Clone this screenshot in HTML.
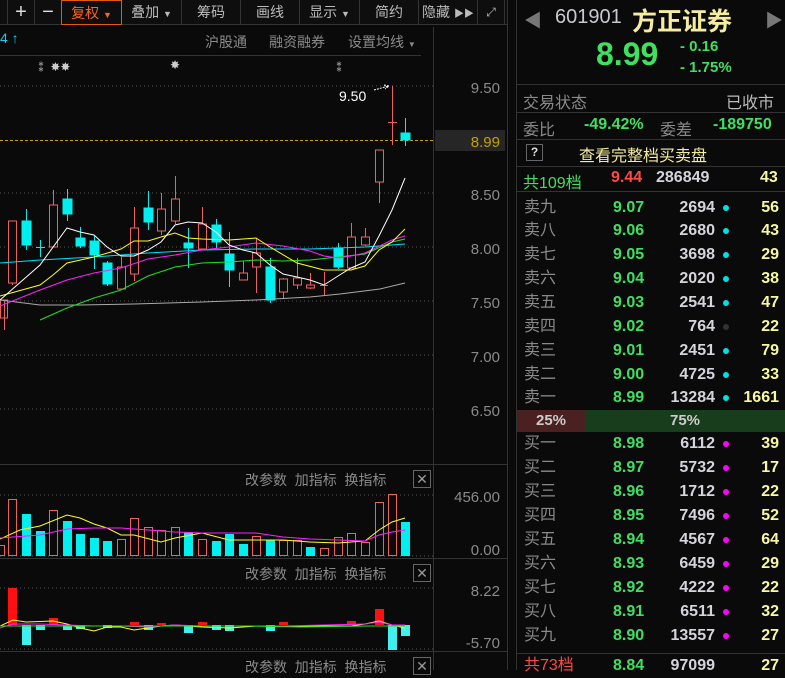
<!DOCTYPE html>
<html><head><meta charset="utf-8"><style>
*{margin:0;padding:0;box-sizing:border-box}
body{width:785px;height:670px;background:#0a0a0a;overflow:hidden;position:relative;font-family:"Liberation Sans","Noto Sans CJK SC",sans-serif;color:#8a8a8a}
.a{position:absolute;white-space:nowrap}
.tb{position:absolute;top:0;height:25px;border-right:1px solid #333;color:#bbb;font-size:14px;text-align:center;line-height:24px}
.row{position:absolute;left:516px;width:269px;height:24px;font-size:16px;line-height:24px}
.row .l{position:absolute;left:8px;color:#8a8a8a}
.row .p{position:absolute;left:97px;color:#3ee060;font-weight:bold}
.row .v{position:absolute;right:70px;color:#d4d4dc;font-weight:bold;text-align:right}
.row .d{position:absolute;left:207px;top:9px;width:6px;height:6px;border-radius:50%}
.row .c{position:absolute;right:6px;color:#f8f8a0;font-weight:bold}
.hd{position:absolute;font-size:14px;color:#8a8a8a}
.x{position:absolute;width:18px;height:18px;border:1px solid #666;color:#999;font-size:14px;line-height:16px;text-align:center}
</style></head><body>
<div class="a" style="left:0;top:0;width:507px;height:25px;background:#0e0e0e;border-bottom:1px solid #333"></div>
<div class="tb" style="left:7px;width:28px;border-left:1px solid #333;font-size:20px;color:#ddd">+</div>
<div class="tb" style="left:35px;width:27px;font-size:20px;color:#ddd">−</div>
<div class="tb" style="left:61px;width:61px;border:1px solid #e05a10;color:#ff6418">复权 <span style="font-size:9px">▼</span></div>
<div class="tb" style="left:122px;width:60px">叠加 <span style="font-size:9px">▼</span></div>
<div class="tb" style="left:182px;width:59px">筹码</div>
<div class="tb" style="left:241px;width:59px">画线</div>
<div class="tb" style="left:300px;width:60px">显示 <span style="font-size:9px">▼</span></div>
<div class="tb" style="left:360px;width:59px">简约</div>
<div class="tb" style="left:419px;width:59px">隐藏 <span style="font-size:10px">▶▶</span></div>
<div class="tb" style="left:478px;width:27px;font-size:12px">⤢</div>

<div class="a" style="left:0;top:30px;font-size:14px;color:#1ec8e8">4 ↑</div>
<div class="a" style="left:205px;top:32px;font-size:14px">沪股通</div>
<div class="a" style="left:269px;top:32px;font-size:14px">融资融券</div>
<div class="a" style="left:348px;top:32px;font-size:14px">设置均线 <span style="font-size:8px">▼</span></div>
<div class="a" style="left:35px;top:58px;font-size:12px;color:#ccc">⁑ ✸✸</div>
<div class="a" style="left:170px;top:58px;font-size:12px;color:#ccc">✸</div>
<div class="a" style="left:333px;top:58px;font-size:12px;color:#ccc">⁑</div>

<svg class="a" style="left:0;top:0" width="516" height="670">
<g stroke="#333" stroke-width="1">
<line x1="0" y1="55.5" x2="421" y2="55.5"/>
<line x1="433.5" y1="27" x2="433.5" y2="670"/>
<line x1="507.5" y1="0" x2="507.5" y2="670"/>
<line x1="0" y1="464.5" x2="507" y2="464.5"/>
<line x1="0" y1="558.5" x2="507" y2="558.5"/>
<line x1="0" y1="651.5" x2="507" y2="651.5"/>
</g>
<g stroke="#555" stroke-dasharray="1,3">
<line x1="0" y1="86" x2="433" y2="86"/><line x1="0" y1="193" x2="433" y2="193"/>
<line x1="0" y1="247" x2="433" y2="247"/><line x1="0" y1="301" x2="433" y2="301"/>
<line x1="0" y1="355" x2="433" y2="355"/><line x1="0" y1="409" x2="433" y2="409"/>
<line x1="0" y1="495" x2="433" y2="495"/><line x1="0" y1="556" x2="433" y2="556"/>
<line x1="0" y1="588" x2="433" y2="588"/><line x1="0" y1="649" x2="433" y2="649"/>
</g>
<line x1="0" y1="140.5" x2="433" y2="140.5" stroke="#d0a000" stroke-dasharray="3,2"/>
<rect x="435" y="130" width="70" height="21" fill="#262626"/>
<g font-size="15" fill="#8a8a8a" text-anchor="end" font-family="Liberation Sans">
<text x="500" y="93">9.50</text><text x="500" y="147" fill="#c8a000">8.99</text>
<text x="500" y="200">8.50</text><text x="500" y="254">8.00</text><text x="500" y="308">7.50</text>
<text x="500" y="362">7.00</text><text x="500" y="416">6.50</text>
<text x="500" y="502">456.00</text><text x="500" y="555">0.00</text>
<text x="500" y="596">8.22</text><text x="500" y="648">-5.70</text>
</g>
<text x="339" y="101" font-size="14" fill="#fff">9.50</text>
<path d="M374 90 L389 86 M384 85 L389 86 L385 89" stroke="#fff" fill="none" stroke-dasharray="2,1"/>
<g stroke="#f06060" fill="none" stroke-width="1">
<path d="M4.5 300V330M12.5 221V285M53.5 190V247M121.5 257V289M134.5 207V281M161.5 193V235M175.5 176V224M202.5 207V249M243.5 261V280M256.5 238V293M283.5 278V298M297.5 258V289M310.5 273V289M324.5 272V295M351.5 223V268M365.5 228V246M379.5 150V203M392.5 86V145"/>
<rect x="0.5" y="300" width="7" height="18"/>
<rect x="8.5" y="221" width="8" height="62" fill="#0a0a0a"/>
<rect x="49.5" y="205" width="8" height="42" fill="#0a0a0a"/>
<rect x="117.5" y="267" width="8" height="22" fill="#0a0a0a"/>
<rect x="130.5" y="228" width="8" height="46" fill="#0a0a0a"/>
<rect x="157.5" y="209" width="8" height="22" fill="#0a0a0a"/>
<rect x="171.5" y="199" width="8" height="22" fill="#0a0a0a"/>
<rect x="198.5" y="224" width="8" height="25" fill="#0a0a0a"/>
<rect x="239.5" y="273" width="8" height="7" fill="#0a0a0a"/>
<rect x="252.5" y="253" width="8" height="14" fill="#0a0a0a"/>
<rect x="279.5" y="279" width="8" height="13" fill="#0a0a0a"/>
<rect x="293.5" y="278" width="8" height="7" fill="#0a0a0a"/>
<rect x="306.5" y="285" width="8" height="3" fill="#0a0a0a"/>
<line x1="320" y1="285.5" x2="328" y2="285.5"/>
<rect x="347.5" y="237" width="8" height="31" fill="#0a0a0a"/>
<rect x="361.5" y="237" width="8" height="8" fill="#0a0a0a"/>
<rect x="375.5" y="150" width="8" height="32" fill="#0a0a0a"/>
<line x1="388" y1="122.5" x2="397" y2="122.5"/>
</g>
<g stroke="#00f0f0" fill="#00f0f0">
<path d="M26.5 209V250M40.5 240V257M67.5 189V221M80.5 227V248M94.5 236V269M107.5 261V286M148.5 191V230M188.5 228V268M216.5 219V248M229.5 232V287M270.5 258V303M338.5 243V269M405.5 118V146" fill="none"/>
<rect x="22" y="221" width="9" height="24"/><line x1="36" y1="247.5" x2="45" y2="247.5"/>
<rect x="63" y="199" width="9" height="15"/><rect x="76" y="238" width="9" height="8"/>
<rect x="90" y="241" width="9" height="14"/><rect x="103" y="263" width="9" height="21"/>
<rect x="144" y="208" width="9" height="14"/><rect x="184" y="243" width="9" height="5"/>
<rect x="212" y="225" width="9" height="17"/><rect x="225" y="254" width="9" height="16"/>
<rect x="266" y="267" width="9" height="33"/><rect x="334" y="248" width="9" height="19"/>
<rect x="401" y="133" width="9" height="7"/>
</g>
<g fill="none" stroke-width="1">
<polyline stroke="#aaa" points="0,300 40,305 80,305 134,304 202,302 256,300 310,297 340,294 380,289 405,283"/>
<polyline stroke="#00e0ff" points="0,263 40,260 94,257 148,253 202,250 256,249 310,249 365,247 405,244"/>
<polyline stroke="#20e020" points="40,320 67,308 94,298 121,290 148,276 175,267 202,263 229,262 256,260 283,261 310,260 338,257 365,254 392,242 405,239"/>
<polyline stroke="#ff20ff" points="0,306 40,290 67,280 94,273 121,268 148,259 175,255 202,250 229,247 256,243 283,246 310,251 324,256 338,258 351,256 365,253 392,240 405,236"/>
<polyline stroke="#ffff20" points="0,296 40,285 53,275 67,263 94,257 121,249 134,241 148,241 161,237 175,233 188,238 202,239 229,240 256,238 270,247 297,263 324,270 351,270 365,266 379,250 392,242 405,229"/>
<polyline stroke="#fff" points="0,300 40,265 67,228 80,232 94,235 107,247 121,256 134,256 148,250 161,242 175,225 188,222 202,223 216,232 229,245 243,250 256,253 270,265 283,274 297,277 310,280 324,285 338,276 351,268 365,262 379,236 392,210 405,178"/>
</g>
<g stroke="#f06060" fill="none">
<rect x="-3.5" y="545.5" width="8" height="10"/><rect x="8.5" y="499.5" width="8" height="56"/>
<rect x="49.5" y="510.5" width="8" height="45"/><rect x="117.5" y="539.5" width="8" height="16"/>
<rect x="130.5" y="518.5" width="8" height="37"/><rect x="144.5" y="527.5" width="8" height="28"/>
<rect x="157.5" y="530.5" width="8" height="25"/><rect x="171.5" y="527.5" width="8" height="28"/>
<rect x="198.5" y="539.5" width="8" height="16"/><rect x="252.5" y="536.5" width="8" height="19"/>
<rect x="279.5" y="540.5" width="8" height="15"/><rect x="293.5" y="540.5" width="8" height="15"/>
<rect x="320.5" y="548.5" width="8" height="7"/><rect x="334.5" y="537.5" width="8" height="18"/>
<rect x="347.5" y="533.5" width="8" height="22"/><rect x="361.5" y="542.5" width="8" height="13"/>
<rect x="375.5" y="502.5" width="8" height="53"/><rect x="388.5" y="494.5" width="8" height="61"/>
</g>
<g fill="#00f0f0">
<rect x="22" y="514" width="9" height="42"/><rect x="36" y="531" width="9" height="25"/>
<rect x="63" y="521" width="9" height="35"/><rect x="76" y="534" width="9" height="22"/>
<rect x="90" y="538" width="9" height="18"/><rect x="103" y="541" width="9" height="15"/>
<rect x="184" y="532" width="9" height="24"/><rect x="212" y="541" width="9" height="15"/>
<rect x="225" y="534" width="9" height="22"/><rect x="239" y="544" width="9" height="12"/>
<rect x="266" y="540" width="9" height="16"/><rect x="306" y="547" width="9" height="9"/>
<rect x="401" y="522" width="9" height="34"/>
</g>
<polyline fill="none" stroke="#ffff20" points="0,539 20,530 40,526 67,515 80,518 94,524 107,528 121,535 134,535 161,542 175,538 202,533 229,540 256,540 283,540 310,542 338,543 351,542 365,541 379,530 392,522 405,518"/>
<polyline fill="none" stroke="#ff20ff" points="0,538 40,535 67,529 94,528 121,528 148,530 175,532 202,533 229,533 256,533 283,537 310,539 338,540 365,541 379,535 392,532 405,530"/>
<g fill="#ff1010"><rect x="8" y="588" width="9" height="37"/><rect x="49" y="618" width="9" height="7"/><rect x="130" y="622" width="9" height="3"/><rect x="157" y="623" width="9" height="2"/><rect x="198" y="622" width="9" height="3"/><rect x="279" y="622" width="9" height="3"/><rect x="347" y="621" width="9" height="4"/><rect x="375" y="609" width="9" height="16"/></g>
<g fill="#40f0f0"><rect x="22" y="625" width="9" height="20"/><rect x="36" y="625" width="9" height="5"/><rect x="63" y="625" width="9" height="5"/><rect x="76" y="625" width="9" height="4"/><rect x="103" y="625" width="9" height="3"/><rect x="144" y="625" width="9" height="5"/><rect x="184" y="625" width="9" height="8"/><rect x="212" y="625" width="9" height="5"/><rect x="225" y="625" width="9" height="6"/><rect x="266" y="625" width="9" height="6"/><rect x="388" y="625" width="9" height="25"/><rect x="401" y="625" width="9" height="11"/></g>
<polyline fill="none" stroke="#ffff20" points="0,626 13,620 26,622 53,621 67,624 80,628 94,631 107,627 121,627 134,630 161,626 175,625 202,627 229,628 256,626 283,626 310,626 351,626 365,624 379,621 392,625 405,628"/>
<polyline fill="none" stroke="#ff20ff" points="0,628 13,624 40,624 67,625 94,626 121,626 148,627 175,625 202,626 243,626 283,626 324,625 365,624 379,622 392,625 405,625"/>
<polyline fill="none" stroke="#20e020" points="0,626 40,626 100,626 160,626 250,626 300,627 370,626 405,626"/>
</svg>
<div class="hd" style="left:245px;top:470px">改参数&nbsp;&nbsp;加指标&nbsp;&nbsp;换指标</div><div class="x" style="left:413px;top:470px">✕</div>
<div class="hd" style="left:245px;top:564px">改参数&nbsp;&nbsp;加指标&nbsp;&nbsp;换指标</div><div class="x" style="left:413px;top:564px">✕</div>
<div class="hd" style="left:245px;top:657px">改参数&nbsp;&nbsp;加指标&nbsp;&nbsp;换指标</div><div class="x" style="left:413px;top:657px">✕</div>

<div class="a" style="left:516px;top:0;width:1px;height:670px;background:#333"></div>
<div class="a" style="left:524px;top:7px;font-size:18px;color:#777">◀</div>
<div class="a" style="left:765px;top:7px;font-size:18px;color:#777">▶</div>
<div class="a" style="left:555px;top:6px;font-size:20px;color:#c8c8d0">601901</div>
<div class="a" style="left:632px;top:2px;font-size:25px;color:#f4eca0;font-weight:bold">方正证券</div>
<div class="a" style="left:596px;top:36px;font-size:32px;color:#3ee060;font-weight:bold">8.99</div>
<div class="a" style="left:680px;top:38px;font-size:15px;color:#3ee060;font-weight:bold">- 0.16</div>
<div class="a" style="left:680px;top:59px;font-size:15px;color:#3ee060;font-weight:bold">- 1.75%</div>
<div class="a" style="left:516px;top:84px;width:269px;height:1px;background:#333"></div>
<div class="a" style="left:523px;top:89px;font-size:16px">交易状态</div>
<div class="a" style="left:726px;top:89px;font-size:16px;color:#bbb">已收市</div>
<div class="a" style="left:516px;top:112px;width:269px;height:1px;background:#333"></div>
<div class="a" style="left:523px;top:116px;font-size:16px">委比</div>
<div class="a" style="left:584px;top:116px;font-size:16px;color:#3ee060;font-weight:bold">-49.42%</div>
<div class="a" style="left:660px;top:116px;font-size:16px">委差</div>
<div class="a" style="left:713px;top:116px;font-size:16px;color:#3ee060;font-weight:bold">-189750</div>
<div class="a" style="left:516px;top:139px;width:269px;height:1px;background:#333"></div>
<div class="a" style="left:526px;top:144px;width:17px;height:17px;border:1px solid #666;font-size:12px;color:#ddd;text-align:center;line-height:15px;font-weight:bold">?</div>
<div class="a" style="left:579px;top:142px;font-size:16px;color:#f4eca0">查看完整档买卖盘</div>
<div class="a" style="left:516px;top:166px;width:269px;height:1px;background:#333"></div>
<div class="a" style="left:523px;top:169px;font-size:16px;color:#3ee060">共109档</div>
<div class="a" style="left:611px;top:169px;font-size:16px;color:#ff4848;font-weight:bold">9.44</div>
<div class="a" style="left:656px;top:169px;font-size:16px;color:#d4d4dc;font-weight:bold">286849</div>
<div class="a" style="left:760px;top:169px;font-size:16px;color:#f8f8a0;font-weight:bold">43</div>
<div class="a" style="left:516px;top:191px;width:269px;height:1px;background:#333"></div>

<div class="row" style="top:196px"><span class="l">卖九</span><span class="p">9.07</span><span class="v">2694</span><span class="d" style="background:#00e0e0"></span><span class="c">56</span></div>
<div class="row" style="top:219px"><span class="l">卖八</span><span class="p">9.06</span><span class="v">2680</span><span class="d" style="background:#00e0e0"></span><span class="c">43</span></div>
<div class="row" style="top:243px"><span class="l">卖七</span><span class="p">9.05</span><span class="v">3698</span><span class="d" style="background:#00e0e0"></span><span class="c">29</span></div>
<div class="row" style="top:267px"><span class="l">卖六</span><span class="p">9.04</span><span class="v">2020</span><span class="d" style="background:#00e0e0"></span><span class="c">38</span></div>
<div class="row" style="top:291px"><span class="l">卖五</span><span class="p">9.03</span><span class="v">2541</span><span class="d" style="background:#00e0e0"></span><span class="c">47</span></div>
<div class="row" style="top:315px"><span class="l">卖四</span><span class="p">9.02</span><span class="v">764</span><span class="d" style="background:#333"></span><span class="c">22</span></div>
<div class="row" style="top:339px"><span class="l">卖三</span><span class="p">9.01</span><span class="v">2451</span><span class="d" style="background:#00e0e0"></span><span class="c">79</span></div>
<div class="row" style="top:363px"><span class="l">卖二</span><span class="p">9.00</span><span class="v">4725</span><span class="d" style="background:#00e0e0"></span><span class="c">33</span></div>
<div class="row" style="top:386px"><span class="l">卖一</span><span class="p">8.99</span><span class="v">13284</span><span class="d" style="background:#00e0e0"></span><span class="c">1661</span></div>
<div class="a" style="left:517px;top:410px;width:68px;height:22px;background:#4a2020;color:#ccc;font-size:15px;font-weight:bold;text-align:center;line-height:22px">25%</div>
<div class="a" style="left:585px;top:410px;width:200px;height:22px;background:#173d1c;color:#ccc;font-size:15px;font-weight:bold;text-align:center;line-height:22px">75%</div>
<div class="row" style="top:432px"><span class="l">买一</span><span class="p">8.98</span><span class="v">6112</span><span class="d" style="background:#ff00ff"></span><span class="c">39</span></div>
<div class="row" style="top:456px"><span class="l">买二</span><span class="p">8.97</span><span class="v">5732</span><span class="d" style="background:#ff00ff"></span><span class="c">17</span></div>
<div class="row" style="top:480px"><span class="l">买三</span><span class="p">8.96</span><span class="v">1712</span><span class="d" style="background:#ff00ff"></span><span class="c">22</span></div>
<div class="row" style="top:504px"><span class="l">买四</span><span class="p">8.95</span><span class="v">7496</span><span class="d" style="background:#ff00ff"></span><span class="c">52</span></div>
<div class="row" style="top:528px"><span class="l">买五</span><span class="p">8.94</span><span class="v">4567</span><span class="d" style="background:#ff00ff"></span><span class="c">64</span></div>
<div class="row" style="top:552px"><span class="l">买六</span><span class="p">8.93</span><span class="v">6459</span><span class="d" style="background:#ff00ff"></span><span class="c">29</span></div>
<div class="row" style="top:576px"><span class="l">买七</span><span class="p">8.92</span><span class="v">4222</span><span class="d" style="background:#ff00ff"></span><span class="c">22</span></div>
<div class="row" style="top:600px"><span class="l">买八</span><span class="p">8.91</span><span class="v">6511</span><span class="d" style="background:#ff00ff"></span><span class="c">32</span></div>
<div class="row" style="top:624px"><span class="l">买九</span><span class="p">8.90</span><span class="v">13557</span><span class="d" style="background:#ff00ff"></span><span class="c">27</span></div>
<div class="a" style="left:516px;top:653px;width:269px;height:1px;background:#333"></div>
<div class="row" style="top:654px"><span class="l" style="color:#ff4848">共73档</span><span class="p">8.84</span><span class="v" style="right:70px">97099</span><span class="c">27</span></div>
</body></html>
